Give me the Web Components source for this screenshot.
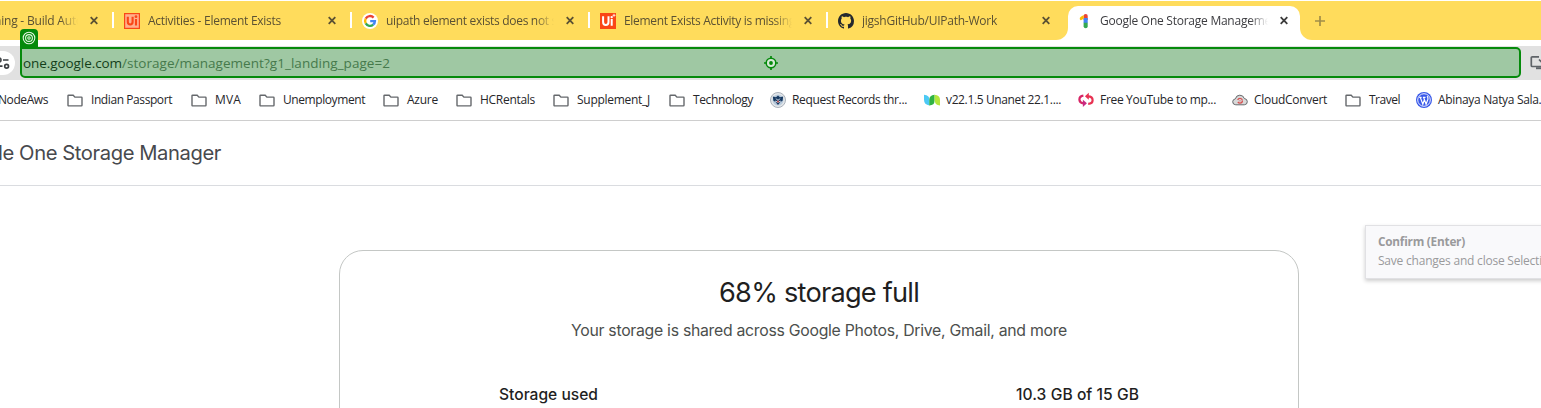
<!DOCTYPE html>
<html lang="en">
<head>
<meta charset="utf-8">
<title>Google One Storage Management</title>
<style>
html,body{margin:0;height:100%;overflow:hidden;background:#fff}
body{font-family:"Open Sans","Noto Sans",sans-serif;font-size:12px}
</style>
</head>
<body>
<browser-window></browser-window>

<template id="t-window">
<style>
:host{display:flex;flex-direction:column;width:1541px;height:408px;overflow:hidden;position:relative;background:#fff}
tool-tip{position:absolute;left:1365px;top:225px}
</style>
<tab-strip></tab-strip>
<address-bar></address-bar>
<bookmark-bar></bookmark-bar>
<page-header><fit-text w="223">le One Storage Manager</fit-text></page-header>
<storage-card>
  <fit-text slot="title" w="200">68% storage full</fit-text>
  <fit-text slot="sub" w="496">Your storage is shared across Google Photos, Drive, Gmail, and more</fit-text>
  <fit-text slot="label" w="99">Storage used</fit-text>
  <fit-text slot="value" w="123">10.3 GB of 15 GB</fit-text>
</storage-card>
<tool-tip>
  <fit-text slot="head" w="87">Confirm (Enter)</fit-text>
  <fit-text w="164">Save changes and close Selecti</fit-text>
</tool-tip>
</template>

<template id="t-strip">
<style>
:host{display:flex;height:39px;padding-top:1px;flex:none;background:#fff}
.left{display:flex;width:1068px;flex:none;background:#ffdc5c;border-radius:0 0 12px 0}
.mid{flex:none;width:232px;display:flex;background:linear-gradient(#ffdc5c 20px,#fff 20px)}
.mid browser-tab{margin-top:5px}
.right{flex:1;background:#ffdc5c;border-radius:0 0 0 12px;display:flex;align-items:center;padding-left:15px}
</style>
<div class="left">
  <browser-tab first><fit-text w="89">ning - Build Auto</fit-text></browser-tab>
  <browser-tab><site-icon slot="icon" name="uip"></site-icon><fit-text w="133">Activities - Element Exists</fit-text></browser-tab>
  <browser-tab><site-icon slot="icon" name="google"></site-icon><fit-text w="171">uipath element exists does not s</fit-text></browser-tab>
  <browser-tab><site-icon slot="icon" name="uip2"></site-icon><fit-text w="171">Element Exists Activity is missing</fit-text></browser-tab>
  <browser-tab><site-icon slot="icon" name="github"></site-icon><fit-text w="135">jigshGitHub/UIPath-Work</fit-text></browser-tab>
</div>
<div class="mid"><browser-tab active><site-icon slot="icon" name="one"></site-icon><fit-text w="171">Google One Storage Manageme</fit-text></browser-tab></div>
<div class="right"><svg width="10" height="10" viewBox="0 0 10 10"><path d="M5 0v10M0 5h10" stroke="#a18d48" stroke-width="1.7"/></svg></div>
</template>

<template id="t-tab">
<style>
:host{box-sizing:border-box;flex:none;display:flex;align-items:center;width:238px;height:39px;padding:0 10px 0 12px;gap:8px;color:#5b5133;background:linear-gradient(#fff,#fff) no-repeat 0 11px/2px 16px}
:host([first]){width:112px;padding-left:0;background:none}
:host([active]){width:232px;height:34px;padding:0 8px 5px;background:#fff;border-radius:10px 10px 0 0;color:#3c3c40}
:host([first]) slot[name=icon]{display:none}
.label{flex:1;min-width:0;overflow:hidden;white-space:nowrap;line-height:20px;-webkit-mask-image:linear-gradient(90deg,#000 calc(100% - 18px),transparent);mask-image:linear-gradient(90deg,#000 calc(100% - 18px),transparent)}
:host([first]) .label{margin-left:-6px}
:host([active]) svg{--x:#3c3c3c}
svg{flex:none}
</style>
<slot name="icon"></slot><div class="label"><slot></slot></div>
<svg width="16" height="16" viewBox="0 0 16 16"><path d="M4.7 4.2l6.6 6.6M11.3 4.2l-6.6 6.6" style="stroke:var(--x,#5b5133)" stroke-width="1.8"/></svg>
</template>

<template id="t-address">
<style>
:host{display:flex;flex:none;height:34px;margin-top:6px;background:#e1e1e1;position:relative;overflow:visible}
.info{flex:none;width:15px;height:24px;margin-top:5px;background:#fff;border-radius:0 12px 12px 0;display:flex;align-items:center}
.field{box-sizing:border-box;flex:none;margin:1px 0 0 5px;width:1501px;height:31px;border:2px solid #058a0b;border-radius:1px 5px 5px 5px;background:#9fc8a3;display:flex;align-items:center;padding-left:1px;font-size:13.5px;line-height:20px;color:#467a4c;white-space:pre}
.host{color:#143f1a}
.tag{position:absolute;left:20px;top:-17px;width:18px;height:19px;background:#058a0b;border-radius:4px 4px 0 0}
.target{position:absolute;left:763px;top:9px}
.cast{margin:9px 0 0 9px;flex:none}
svg{display:block}
</style>
<div class="info"><svg width="12" height="16" viewBox="0 0 12 16" fill="none" stroke="#3c4043" stroke-width="1.7"><circle cx="-1" cy="5" r="2"/><path d="M3 5h5.5M-4 11.2h6.5"/><circle cx="6.6" cy="11.2" r="1.9"/></svg></div>
<div class="field"><fit-text class="host" w="99">one.google.com</fit-text><fit-text w="268">/storage/management?g1_landing_page=2</fit-text></div>
<svg class="cast" width="20" height="17" viewBox="0 0 20 17" fill="none" stroke="#5f6368"><path d="M9 1.8H2.3Q1.3 1.8 1.3 2.8V10.5Q1.3 11.5 2.3 11.5H18" stroke-width="1.7"/><path d="M6 13.2h9" stroke-width="2"/><path d="M9 4.5l3.5 3.5M12.5 1v8" stroke-width="1.7"/></svg>
<div class="tag"><svg width="18" height="18" viewBox="0 0 18 18" fill="none" stroke="#e4f4e4" stroke-width="1.1"><circle cx="9" cy="9" r="5.8"/><circle cx="9" cy="9" r="3.4"/><circle cx="9" cy="9" r="1.2"/></svg></div>
<svg class="target" width="16" height="16" viewBox="0 0 16 16"><circle cx="8" cy="8" r="4.8" fill="#d5e9d6" stroke="#058a0b" stroke-width="1.5"/><circle cx="8" cy="8" r="1.9" fill="#058a0b"/><path d="M8 1v3M8 12v3M1 8h3M12 8h3" stroke="#058a0b" stroke-width="1.7"/></svg>
</template>

<template id="t-bookmarks">
<style>
:host{box-sizing:border-box;display:flex;flex:none;height:41px;border-bottom:1px solid #cecece;align-items:center;overflow:hidden;color:#26262a;line-height:20px}
</style>
</template>

<template id="t-bookmark">
<style>
:host{display:flex;flex:none;align-items:center;gap:8px;height:40px;white-space:nowrap}
:host([site]){gap:6px}
</style>
<slot name="icon"></slot><slot></slot>
</template>

<template id="t-header">
<style>
:host{box-sizing:border-box;display:flex;flex:none;height:65px;border-bottom:1px solid #dadce0;align-items:center;font:400 20.2px/28px Inter,sans-serif;color:#47494d;white-space:nowrap}
::slotted(*){margin-left:-2px}
</style>
<slot></slot>
</template>

<template id="t-card">
<style>
:host{box-sizing:border-box;display:flex;flex-direction:column;align-items:center;flex:none;width:960px;height:240px;margin:64px 0 0 339px;border:1px solid #c4c7c5;border-radius:24px;font-family:Inter,sans-serif;white-space:nowrap;color:#1f1f1f}
.title{font-size:27.2px;line-height:36px;margin-top:24px}
.sub{font-size:15.8px;line-height:24px;margin-top:8px;color:#4c4f4d}
.row{align-self:stretch;display:flex;justify-content:space-between;padding:0 159px;margin-top:40px;font-size:15.6px;font-weight:500;line-height:24px}
</style>
<div class="title"><slot name="title"></slot></div>
<div class="sub"><slot name="sub"></slot></div>
<div class="row"><slot name="label"></slot><slot name="value"></slot></div>
</template>

<template id="t-tip">
<style>
:host{box-sizing:border-box;display:flex;flex-direction:column;width:240px;height:54px;padding:6px 12px;background:#f9f9fb;border:1px solid #e1e1e4;box-shadow:0 2px 4px rgba(0,0,0,.2);color:#9a9a9c;line-height:19px;white-space:nowrap}
.h{font-weight:700;font-size:11.8px}
</style>
<div class="h"><slot name="head"></slot></div><div><slot></slot></div>
</template>

<script>
const stamp = (el, id) => {
  const root = el.attachShadow({mode: 'open'});
  root.append(document.getElementById(id).content.cloneNode(true));
  return root;
};
const simple = (name, id) => customElements.define(name, class extends HTMLElement {
  constructor() { super(); stamp(this, id); }
});

const ICONS = {
  folder: '<path d="M1.6 3.2h4.6l1.7 1.9h6.5q.6 0 .6.6v7.6q0 .6-.6.6H1.6q-.6 0-.6-.6V3.8q0-.6.6-.6z" fill="none" stroke="#65686c" stroke-width="1.4"/>',
  uip: '<path fill="#fa4616" d="M0 0h16v16H0z"/><path fill="#ffaf8c" d="M1.2 1.2h13.6v13.6H1.2z"/><path d="M3.8 3.7v5.1q0 2.7 2.4 2.7t2.4-2.7V3.7M12 6v6.4" fill="none" stroke="#fa4616" stroke-width="2.1"/><circle cx="12" cy="3.7" r="1.4" fill="#fa4616"/>',
  uip2: '<path fill="#fa4616" d="M0 0h16v16H0z"/><path d="M3.1 3.3v5.6q0 3 2.7 3t2.7-3V3.3M11.7 6v6.7" fill="none" stroke="#fff" stroke-width="2"/><circle cx="11.7" cy="4.1" r="1.2" fill="#fff"/><path d="M14 .8v3M12.5 2.3h3" stroke="#fff" stroke-width=".8"/>',
  google: '<circle cx="8" cy="8" r="8" fill="#fff"/><g fill="none" stroke-width="2.4"><path d="M11.6 4.6A4.9 4.9 0 0 0 3.75 5.55" stroke="#ea4335"/><path d="M3.75 5.55A4.9 4.9 0 0 0 3.75 10.45" stroke="#fbbc05"/><path d="M3.75 10.45A4.9 4.9 0 0 0 11.2 11.7" stroke="#34a853"/><path d="M11.2 11.7A4.9 4.9 0 0 0 12.9 8.1H8.2" stroke="#4285f4"/></g>',
  github: '<path fill="#24292e" d="M8 0C3.58 0 0 3.58 0 8c0 3.54 2.29 6.53 5.47 7.59.4.07.55-.17.55-.38 0-.19-.01-.82-.01-1.49-2.01.37-2.53-.49-2.69-.94-.09-.23-.48-.94-.82-1.13-.28-.15-.68-.52-.01-.53.63-.01 1.08.58 1.23.82.72 1.21 1.87.87 2.33.66.07-.52.28-.87.51-1.07-1.78-.2-3.64-.89-3.64-3.95 0-.87.31-1.59.82-2.15-.08-.2-.36-1.02.08-2.12 0 0 .67-.21 2.2.82.64-.18 1.32-.27 2-.27s1.36.09 2 .27c1.53-1.04 2.2-.82 2.2-.82.44 1.1.16 1.92.08 2.12.51.56.82 1.27.82 2.15 0 3.07-1.87 3.75-3.65 3.95.29.25.54.73.54 1.48 0 1.07-.01 1.93-.01 2.2 0 .21.15.46.55.38A8.01 8.01 0 0 0 16 8c0-4.42-3.58-8-8-8z"/>',
  one: '<path d="M7.6 7V3.1Q7.6 1 9.7 1t2 2.1V7z" fill="#ea4335"/><path d="M7.6 5h4.1v5H7.6z" fill="#4285f4"/><path d="M7.6 9.8h4.1v3.4q0 2-2 2t-2.1-2z" fill="#34a853"/><path d="M3.9 6.6Q3.2 4.7 4.8 3.7L7.7 2v3.5L6 6.8q-1.4.9-2.1-.2z" fill="#fbbc04"/>',
  seal: '<circle cx="8" cy="8" r="7.5" fill="#e4e7ea" stroke="#aab2bb"/><circle cx="8" cy="8" r="5.5" fill="#b9cbdc"/><path d="M2.8 4.5L6 5.2l2-1.6 2 1.6 3.2-.7-.6 4.2-2.2 1.2L8 13l-2.4-3.1-2.2-1.2z" fill="#173a63"/><path d="M6.2 6.6l1.8 2 1.8-2M5.2 9.1l2.8 1.2 2.8-1.2" stroke="#e6edf3" fill="none"/><path d="M8 8.2l1.2 1.2L8 11 6.8 9.4z" fill="#b44a4c"/>',
  unanet: '<path d="M0 2.8q5.5.2 5.5 5.2v5.4Q0 12.9 0 7.5z" fill="#4cc9f5"/><path d="M10.6 2.8v5.4q0 5.2-5.3 5.2V8.1q0-5.1 5.3-5.3z" fill="#2fb344"/><path d="M10.6 2.8Q16 3 16 8v5.4q-5.4-.2-5.4-5.4z" fill="#b4e63c"/>',
  youtube: '<g fill="none" stroke-width="2.2"><path d="M5.4 3.6Q1.4 4.2 1.4 7.4t3.6 3.9" stroke="#d72566"/><path d="M10 4.3q4.6.1 4.6 3.9 0 3.4-4.4 3.7" stroke="#e83252"/></g><path d="M10.8.8v7L6.9 4.3z" fill="#e83252"/><path d="M4.9 7.8v7.2l4-3.7z" fill="#c72a83"/>',
  cloud: '<path d="M3.8 12.8Q.7 12.7.7 9.8q0-2.5 2.7-3 .8-3.6 4.4-3.6 3.5 0 4.5 3.3 3 .4 3 3.2 0 2.9-3 3.1z" fill="#d9d9d9" stroke="#66696c" stroke-width="1"/><circle cx="8" cy="8.8" r="2.4" fill="none" stroke="#d65050" stroke-width="1.3" stroke-dasharray="5.7 1.8"/><circle cx="8" cy="8.8" r=".6" fill="#d65050"/>',
  wp: '<circle cx="8" cy="8" r="8" fill="#3858e9"/><circle cx="8" cy="8" r="6.3" fill="none" stroke="#fff" stroke-width=".9"/><path d="M3.2 5.4h2.4M6.9 5.4h2.6M4.3 5.4l2.5 6.8L8.3 8M7.6 5.4l2.5 6.8 1.8-5q.4-1.5-.8-3" fill="none" stroke="#fff" stroke-width="1.2"/>'
};
customElements.define('site-icon', class extends HTMLElement {
  constructor() {
    super();
    this.attachShadow({mode: 'open'});
  }
  connectedCallback() {
    this.shadowRoot.innerHTML = '<style>:host{display:block;flex:none;width:16px;height:16px}svg{display:block}</style>' +
      '<svg width="16" height="16" viewBox="0 0 16 16">' + ICONS[this.getAttribute('name')] + '</svg>';
  }
});

// icon, label, label width, distance to the next bookmark
const BOOKMARKS = [
  ['', 'NodeAws', 50, 67],
  ['folder', 'Indian Passport', 81, 124],
  ['folder', 'MVA', 26, 68],
  ['folder', 'Unemployment', 82, 124],
  ['folder', 'Azure', 31, 73],
  ['folder', 'HCRentals', 55, 97],
  ['folder', 'Supplement_J', 73, 116],
  ['folder', 'Technology', 60, 101],
  ['seal', 'Request Records thr...', 115, 154],
  ['unanet', 'v22.1.5 Unanet 22.1....', 115, 154],
  ['youtube', 'Free YouTube to mp...', 116, 154],
  ['cloud', 'CloudConvert', 73, 113],
  ['folder', 'Travel', 31, 71],
  ['wp', 'Abinaya Natya Sala...', 109, 140]
];
customElements.define('bookmark-bar', class extends HTMLElement {
  constructor() {
    super();
    const root = stamp(this, 't-bookmarks');
    for (const [icon, label, w, step] of BOOKMARKS) {
      const item = document.createElement('bookmark-item');
      item.style.width = step + 'px';
      if (icon && icon !== 'folder') item.setAttribute('site', '');
      item.innerHTML = (icon ? `<site-icon slot="icon" name="${icon}"></site-icon>` : '') +
        `<fit-text w="${w}"${icon ? '' : ' style="margin-left:-2px"'}>${label}</fit-text>`;
      root.append(item);
    }
  }
});
simple('bookmark-item', 't-bookmark');
simple('browser-tab', 't-tab');
simple('tab-strip', 't-strip');
simple('address-bar', 't-address');
simple('page-header', 't-header');
simple('storage-card', 't-card');
simple('tool-tip', 't-tip');
simple('browser-window', 't-window');

// Text run tracked so that it fills the width given in "w".
customElements.define('fit-text', class extends HTMLElement {
  constructor() {
    super();
    this.attachShadow({mode: 'open'}).innerHTML =
      '<style>:host{display:inline-block;flex:none;white-space:pre}</style><slot></slot>';
  }
  connectedCallback() {
    const w = +this.getAttribute('w');
    const natural = this.getBoundingClientRect().width;
    this.style.letterSpacing = ((w - natural) / this.textContent.length).toFixed(4) + 'px';
  }
});
</script>
</body>
</html>
